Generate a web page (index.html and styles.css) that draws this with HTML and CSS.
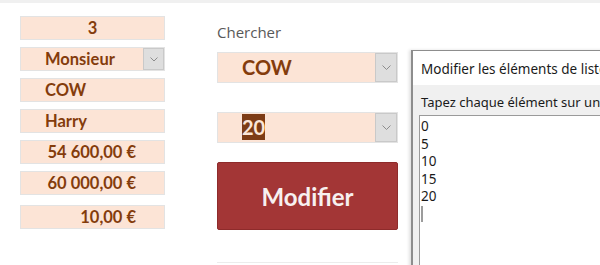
FILE: index.html
```html
<!DOCTYPE html>
<html>

<head>
    <title>Fiche client</title>
    <link rel="stylesheet" href="styles.css">
</head>

<body>
    <div class="topbar"></div>
    <div class="sheet">
        <div class="fields">
            <div class="field center">3</div>
            <div class="field left with-drop">
                <span>Monsieur</span>
                <span class="drop small">
                    <svg width="8" height="5" viewBox="0 0 8 5"><polyline points="0.5,0.5 4,4 7.5,0.5" fill="none" stroke="#8c8c8c" stroke-width="1"/></svg>
                </span>
            </div>
            <div class="field left">COW</div>
            <div class="field left">Harry</div>
            <div class="field right">54 600,00 €</div>
            <div class="field right">60 000,00 €</div>
            <div class="field right last">10,00 €</div>
        </div>

        <div class="search">
            <div class="label">Chercher</div>
            <div class="combo">
                <span class="combo-text">COW</span>
                <span class="drop big">
                    <svg width="9" height="5" viewBox="0 0 9 5"><polyline points="0.5,0.5 4.5,4.5 8.5,0.5" fill="none" stroke="#8c8c8c" stroke-width="1"/></svg>
                </span>
            </div>
            <div class="combo second">
                <span class="combo-text"><span class="selected">20</span></span>
                <span class="drop big">
                    <svg width="9" height="5" viewBox="0 0 9 5"><polyline points="0.5,0.5 4.5,4.5 8.5,0.5" fill="none" stroke="#8c8c8c" stroke-width="1"/></svg>
                </span>
            </div>
            <button class="btn">Modifier</button>
            <div class="bottom-line"></div>
        </div>

        <div class="dialog">
            <div class="dialog-title">Modifier les éléments de liste</div>
            <div class="dialog-body">
                <div class="hint">Tapez chaque élément sur une ligne séparée</div>
                <div class="list">
                    <div>0</div>
                    <div>5</div>
                    <div>10</div>
                    <div>15</div>
                    <div>20</div>
                    <div class="caret"></div>
                </div>
            </div>
        </div>
    </div>
</body>

</html>
```

FILE: styles.css
```css
body {
    margin: 0;
    padding: 0;
    background-color: #fff;
    overflow: hidden;
    height: 265px;
}

.topbar {
    height: 3px;
    background-color: #f0f0f0;
}

.sheet {
    display: flex;
    align-items: flex-start;
}

/* colonne de gauche */
.fields {
    width: 145px;
    flex-shrink: 0;
    margin-left: 20px;
    margin-top: 13px;
    display: flex;
    flex-direction: column;
    gap: 7px;
}

.field {
    height: 24px;
    box-sizing: border-box;
    background-color: #fce4d6;
    border: 1px solid #e3e3e3;
    color: #843c0c;
    font-family: Lato, "Liberation Sans", sans-serif;
    font-weight: bold;
    font-size: 16.5px;
    line-height: 22px;
    white-space: nowrap;
    display: flex;
    align-items: center;
}

.center {
    justify-content: center;
}

.left {
    padding-left: 24px;
}

.right {
    justify-content: flex-end;
    padding-right: 28px;
}

.last {
    margin-top: 3px;
}

.with-drop {
    justify-content: space-between;
    padding-right: 0;
}

.drop {
    display: flex;
    align-items: center;
    justify-content: center;
    background-color: #dedede;
    border: 1px solid #c9c9c9;
    box-sizing: border-box;
}

.drop.small {
    width: 21px;
    height: 22px;
}

.drop.big {
    width: 22px;
    height: 100%;
}

/* colonne du milieu */
.search {
    width: 181px;
    flex-shrink: 0;
    margin-left: 52px;
    display: flex;
    flex-direction: column;
}

.label {
    margin-top: 19px;
    color: #595959;
    font-family: "Open Sans", sans-serif;
    font-size: 15px;
    line-height: 20px;
}

.combo {
    margin-top: 10px;
    height: 31px;
    box-sizing: border-box;
    background-color: #fce4d6;
    border: 1px solid #e3e3e3;
    display: flex;
    justify-content: space-between;
}

.combo.second {
    margin-top: 29px;
}

.combo-text {
    padding-left: 24px;
    color: #843c0c;
    font-family: Lato, "Liberation Sans", sans-serif;
    font-weight: bold;
    font-size: 20px;
    line-height: 29px;
}

.selected {
    background-color: #7d3c16;
    color: #fbe6d8;
    display: inline-block;
    line-height: 26px;
}

.btn {
    margin-top: 19px;
    height: 68px;
    background-color: #a33636;
    border: 1px solid #8e2b2b;
    border-radius: 2px;
    color: #f7f0f0;
    font-family: Lato, "Liberation Sans", sans-serif;
    font-weight: bold;
    font-size: 24px;
    padding: 0;
}

.bottom-line {
    margin-top: 32px;
    height: 1px;
    background-color: #ececec;
}

/* boite de dialogue */
.dialog {
    margin-left: 13px;
    margin-top: 47px;
    width: 200px;
    height: 230px;
    flex-shrink: 0;
    overflow: hidden;
    background-color: #f0f0f0;
    border: 1px solid #8d8d8d;
    border-left-width: 2px;
    box-shadow: -2px 0 3px rgba(0, 0, 0, 0.12);
    font-family: "Noto Sans", "Open Sans", sans-serif;
    color: #1a1a1a;
    white-space: nowrap;
}

.dialog-title {
    height: 34px;
    background-color: #fff;
    padding-left: 8px;
    font-size: 13.5px;
    line-height: 36px;
}

.dialog-body {
    padding-left: 6px;
}

.hint {
    padding-left: 2px;
    padding-top: 8px;
    font-size: 13px;
    line-height: 18px;
}

.list {
    margin-top: 4px;
    height: 200px;
    background-color: #fff;
    border: 1px solid #9a9a9a;
    border-right: none;
    font-size: 13.5px;
    line-height: 17.5px;
    padding-left: 1px;
    padding-top: 2px;
}

.caret {
    width: 2px;
    height: 16px;
    background-color: #9c9c9c;
}
```
